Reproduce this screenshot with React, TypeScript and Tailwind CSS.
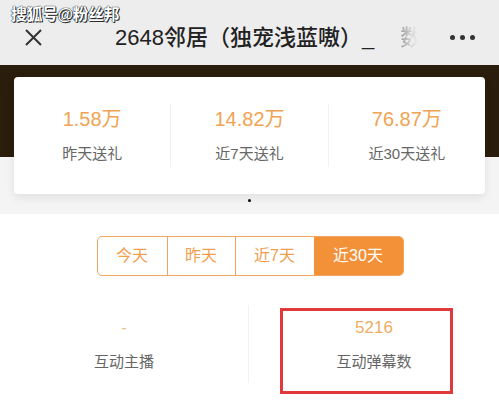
const font = { fontFamily: '"Liberation Sans", "Noto Sans CJK SC", sans-serif' };

const gifts = [
  { value: "1.58万", label: "昨天送礼" },
  { value: "14.82万", label: "近7天送礼" },
  { value: "76.87万", label: "近30天送礼" },
];

const tabs = [
  { label: "今天", w: "w-[69px]" },
  { label: "昨天", w: "w-[68px]" },
  { label: "近7天", w: "w-[79px]" },
  { label: "近30天", w: "w-[89px]", active: true },
];

export default function App() {
  return (
    <div className="w-[499px] h-[409px] overflow-hidden bg-white" style={font}>
      {/* header */}
      <header className="relative flex items-center h-[65px] pt-[10px] pl-[25px] pr-[24px] bg-[#ededed]">
        <span className="absolute left-[11px] top-[3px] text-[16px] font-bold text-white tracking-[-0.5px] [text-shadow:0_0_1px_#111,0_0_1px_#111,1px_1px_0_#333]">
          搜狐号@粉丝邦
        </span>
        <svg width="17" height="17" viewBox="0 0 17 17" className="shrink-0">
          <path d="M1 1 L16 16 M16 1 L1 16" stroke="#333" strokeWidth="2" />
        </svg>
        <div className="ml-[73px] whitespace-nowrap text-[22px] font-medium text-[#222]">
          2648邻居（独宠浅蓝嗷）_
          <span className="ml-[26px] bg-[linear-gradient(to_right,#9a9a9a_0%,#d8d8d8_55%,#ededed_85%)] bg-clip-text text-transparent">
            数
          </span>
        </div>
        <div className="ml-auto flex gap-[5px]">
          <span className="w-[5px] h-[5px] rounded-full bg-[#333]" />
          <span className="w-[5px] h-[5px] rounded-full bg-[#333]" />
          <span className="w-[5px] h-[5px] rounded-full bg-[#333]" />
        </div>
      </header>

      {/* gift card */}
      <section className="px-[14px] pt-[12px] pb-[12px] bg-[linear-gradient(to_bottom,#2b1d0b_92px,#f4f4f4_92px)]">
        <div className="flex items-center h-[117px] bg-white rounded-[4px] shadow-[0_4px_10px_rgba(0,0,0,0.08)]">
          {gifts.map((g, i) => (
            <div
              key={g.label}
              className={`flex-1 h-[63px] flex flex-col items-center pt-[3px] ${i > 0 ? "border-l border-[#f2f2f2]" : ""}`}
            >
              <span className="text-[20px] leading-[24px] text-[#f1a352]">{g.value}</span>
              <span className="mt-[13px] text-[15px] leading-[20px] text-[#666]">{g.label}</span>
            </div>
          ))}
        </div>
        <div className="mt-[5px] mx-auto w-[3px] h-[3px] rounded-full bg-black" />
      </section>

      {/* tabs */}
      <div className="flex justify-center pt-[22px] pl-[1px]">
        <div className="flex h-[40px] rounded-[5px] border border-[#f0a65c] overflow-hidden">
          {tabs.map((t, i) => (
            <div
              key={t.label}
              className={`${t.w} flex items-center justify-center text-[16px] ${
                t.active ? "bg-[#f29138] text-white" : "text-[#f0a050]"
              } ${i > 0 && !t.active ? "border-l border-[#f0a65c]" : ""}`}
            >
              {t.label}
            </div>
          ))}
        </div>
      </div>

      {/* interaction stats */}
      <div className="flex mt-[29px]">
        <div className="w-[249px] h-[78px] flex flex-col items-center pt-[12px] border-r border-[#f2f2f2]">
          <span className="text-[17px] leading-[22px] text-[#f1c08a]">-</span>
          <span className="mt-[13px] text-[15px] leading-[20px] text-[#666]">互动主播</span>
        </div>
        <div className="relative flex-1 h-[78px] flex flex-col items-center pt-[12px]">
          <span className="text-[17px] leading-[22px] text-[#f0ad62]">5216</span>
          <span className="mt-[13px] text-[15px] leading-[20px] text-[#666]">互动弹幕数</span>
          <div className="absolute left-[31px] top-[3px] w-[173px] h-[86px] border-[3px] border-[#e0393b]" />
        </div>
      </div>
    </div>
  );
}
